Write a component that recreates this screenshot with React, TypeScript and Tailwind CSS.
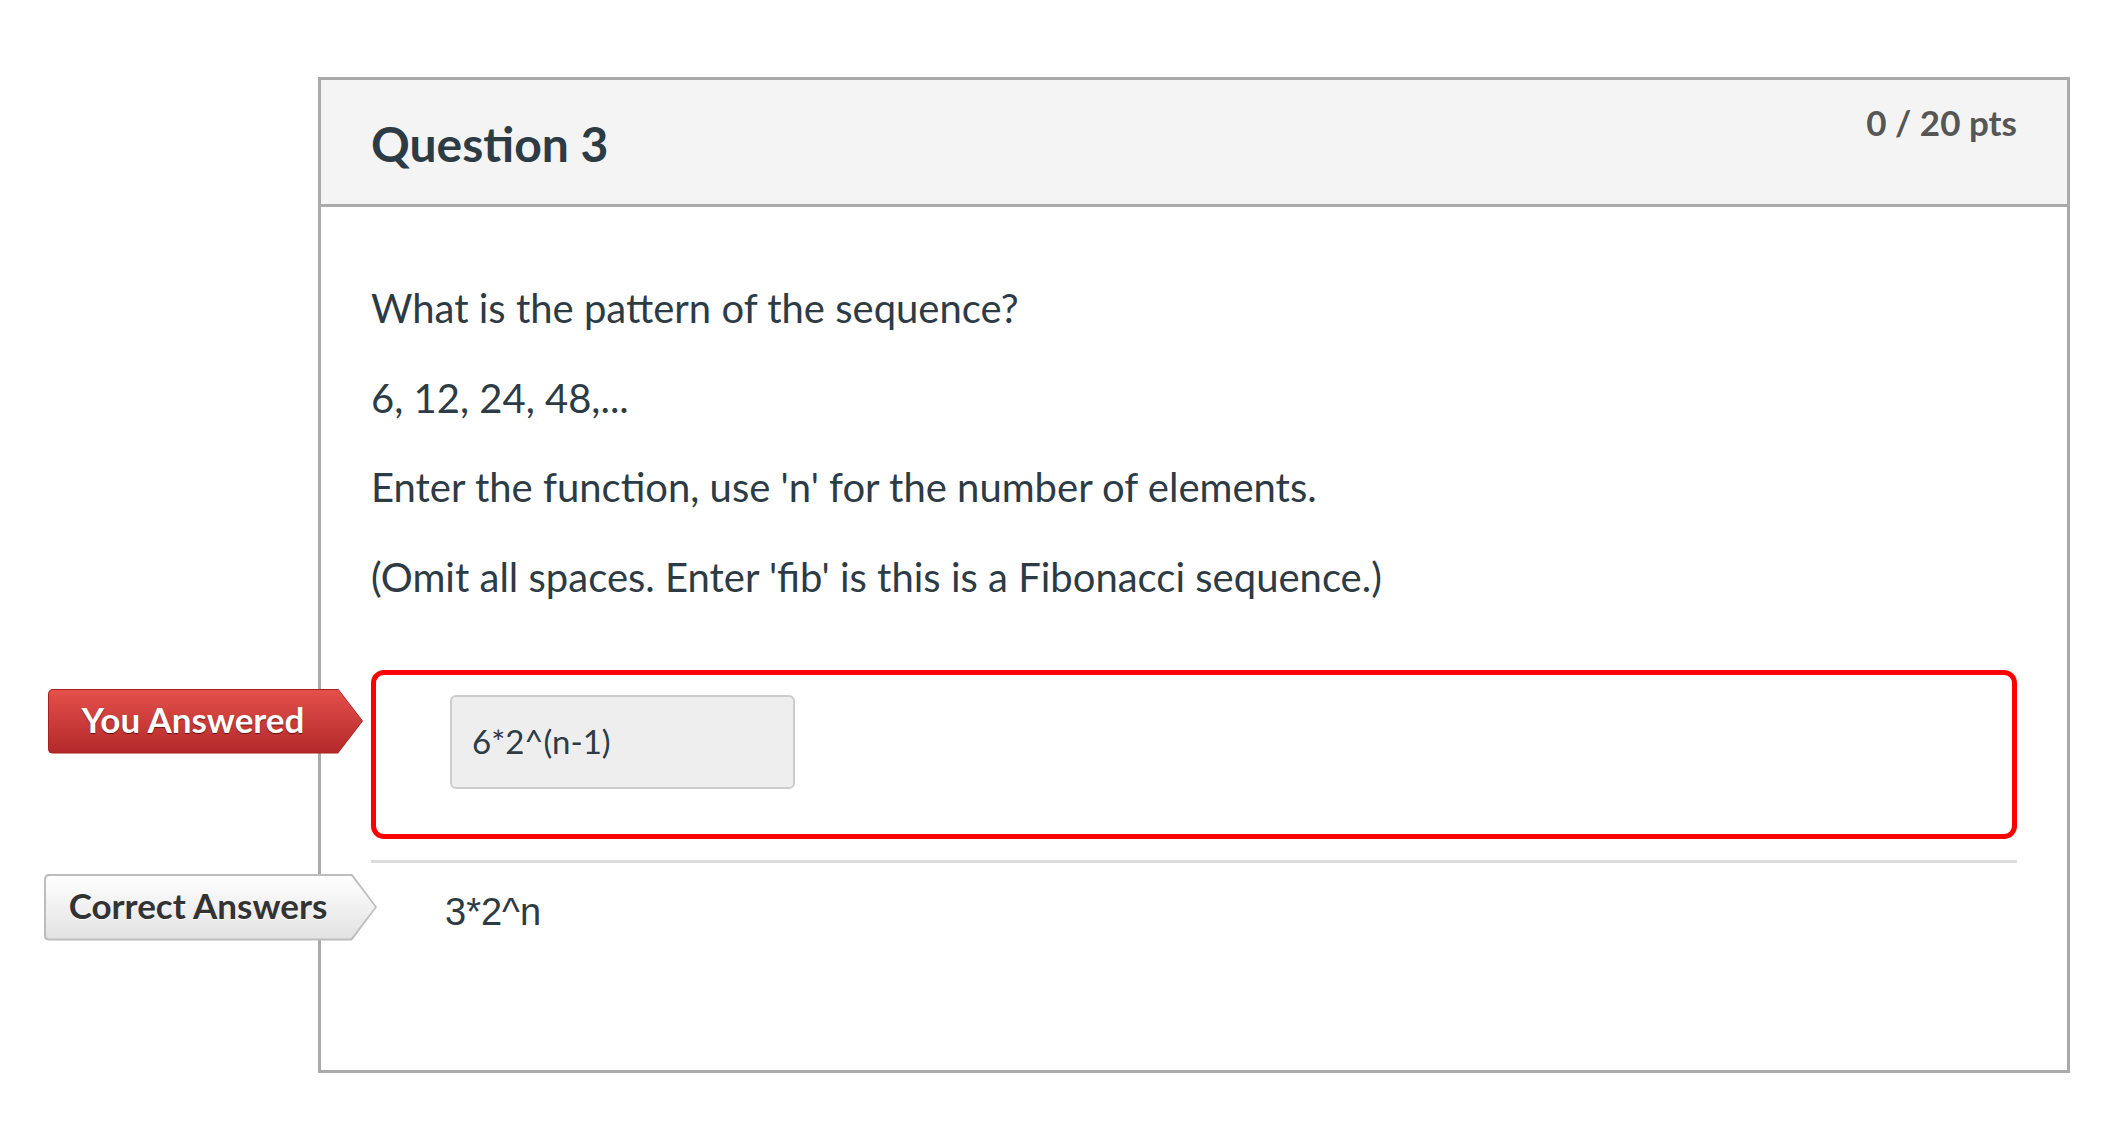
import React from "react";

function RedBadge() {
  return (
    <div className="absolute left-[-328px] top-[14px] h-[65px] w-[315px] rounded-l-[5px] bg-[#a8201e] [clip-path:polygon(0_0,calc(100%_-_25px)_0,100%_50%,calc(100%_-_25px)_100%,0_100%)]">
      <div className="absolute inset-[1px] rounded-l-[4px] bg-gradient-to-b from-[#e4504b] to-[#b3282a] flex items-center pr-[25px] [clip-path:polygon(0_0,calc(100%_-_24px)_0,100%_50%,calc(100%_-_24px)_100%,0_100%)]">
        <span className="w-full text-center font-[Lato,sans-serif] text-[35px] font-bold leading-none text-white pb-[3px] [text-shadow:0_1px_1px_rgba(60,0,0,0.7)]">
          You Answered
        </span>
      </div>
    </div>
  );
}

function GrayBadge() {
  return (
    <div className="absolute left-[-327px] top-[-17px] h-[67px] w-[333px] rounded-l-[5px] bg-[#bdbdbd] [clip-path:polygon(0_0,calc(100%_-_25px)_0,100%_50%,calc(100%_-_25px)_100%,0_100%)]">
      <div className="absolute inset-[2px] rounded-l-[4px] bg-gradient-to-b from-[#ffffff] to-[#e2e2e2] flex items-center pr-[25px] [clip-path:polygon(0_0,calc(100%_-_24px)_0,100%_50%,calc(100%_-_24px)_100%,0_100%)]">
        <span className="w-full text-center font-[Lato,sans-serif] text-[35px] font-bold leading-none text-[#333333] pb-[3px] [text-shadow:0_1px_0_rgba(255,255,255,0.9)]">
          Correct Answers
        </span>
      </div>
    </div>
  );
}

export default function App() {
  return (
    <div className="w-[2119px] h-[1123px] bg-white overflow-hidden pl-[318px] pt-[77px] font-[Lato,'Noto_Sans',sans-serif]">
      <div className="w-[1752px] h-[996px] border-[3px] border-[#aaaaaa] bg-white flex flex-col">
        <div className="h-[127px] shrink-0 bg-[#f4f4f4] border-b-[3px] border-[#aaaaaa] flex justify-between items-start px-[50px]">
          <h2 className="pt-[40px] text-[48px] font-bold leading-[48px] text-[#2d3b45]">Question 3</h2>
          <div className="pt-[25px] text-[35px] font-bold leading-[35px] text-[#565656]">0 / 20 pts</div>
        </div>
        <div className="px-[50px] pt-[73px] flex flex-col">
          <div className="text-[40px] leading-[56px] text-[#2d3b45] flex flex-col gap-[33.5px]">
            <p>What is the pattern of the sequence?</p>
            <p>6, 12, 24, 48,...</p>
            <p>Enter the function, use 'n' for the number of elements.</p>
            <p>(Omit all spaces. Enter 'fib' is this is a Fibonacci sequence.)</p>
          </div>
          <div className="relative mt-[65px] h-[169px] border-[5px] border-[#ff0000] rounded-[13px] pl-[74px] pt-[20px]">
            <RedBadge />
            <div className="w-[345px] h-[94px] bg-[#eeeeee] border-2 border-[#cccccc] rounded-[6px] flex items-center pl-[20px]">
              <span className="text-[33px] text-[#2d3b45] leading-none">6*2^(n-1)</span>
            </div>
          </div>
          <div className="mt-[21px] h-[3px] bg-[#dddddd]" />
          <div className="relative mt-[28px] pl-[74px]">
            <GrayBadge />
            <span className="block font-['Liberation_Sans',Arial,sans-serif] text-[38px] leading-[42px] text-[#2d3b45]">
              3*2^n
            </span>
          </div>
        </div>
      </div>
    </div>
  );
}
